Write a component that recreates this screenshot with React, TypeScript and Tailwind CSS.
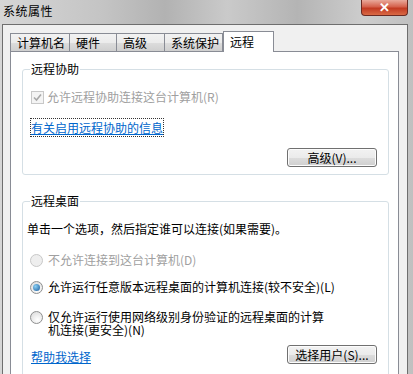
import React from "react";

const font = { fontFamily: '"Noto Sans CJK SC", "Liberation Sans", sans-serif' };

function Btn({ children }: { children: React.ReactNode }) {
  return (
    <div className="w-[90px] h-[19px] border border-[#707070] rounded-[3px] bg-[linear-gradient(180deg,#f2f2f2_0%,#ebebeb_50%,#dddddd_51%,#cfcfcf_100%)] shadow-[inset_0_0_0_1px_#fcfcfc] flex items-center justify-center text-[12px] leading-none text-black">
      {children}
    </div>
  );
}

function Radio({ checked, disabled }: { checked?: boolean; disabled?: boolean }) {
  return (
    <div
      className={
        "w-[13px] h-[13px] rounded-full border flex items-center justify-center shrink-0 " +
        (disabled
          ? "border-[#c8c8c8] bg-[#eeeeee]"
          : "border-[#8e8f8f] bg-[radial-gradient(circle_at_60%_70%,#ffffff,#d8d8d8)]")
      }
    >
      {checked && <div className="w-[7px] h-[7px] rounded-full bg-[radial-gradient(circle_at_35%_35%,#8ad0f5,#1a5a9a)]" />}
    </div>
  );
}

function Tab({ label, w, active }: { label: string; w: string; active?: boolean }) {
  return (
    <div
      className={
        "border border-[#898c95] border-b-0 flex items-center pl-[6px] text-[12px] leading-none text-black " +
        w +
        (active
          ? " h-[21px] bg-white -mb-px relative z-10"
          : " h-[18px] -ml-px first:ml-0 bg-[linear-gradient(180deg,#f2f2f2,#ebebeb_50%,#dddddd_51%,#cfcfcf)]")
      }
    >
      {label}
    </div>
  );
}

export default function App() {
  return (
    <div
      className="w-[413px] h-[374px] overflow-hidden bg-[linear-gradient(90deg,#d6d6d6_0%,#c4c4c4_25%,#b2b2b2_40%,#cacaca_55%,#b4b4b4_72%,#cdcdcd_88%,#c0c0c0_100%)] flex flex-col"
      style={font}
    >
      {/* title bar */}
      <div className="h-[24px] shrink-0 flex items-start justify-between">
        <span className="text-[12px] tracking-[0.5px] text-black pl-[3px] pt-[3px] leading-[15px]">系统属性</span>
        <div className="mr-[5px] w-[47px] h-[16px] rounded-b-[4px] border border-t-0 border-[#6b2a22] bg-[linear-gradient(180deg,#e9a99b_0%,#d5614c_45%,#c23a22_55%,#d96a45_100%)] flex items-center justify-center">
          <span className="text-white text-[13px] font-bold leading-none" style={{ fontFamily: '"Liberation Sans", sans-serif' }}>
            ✕
          </span>
        </div>
      </div>

      {/* client area */}
      <div className="ml-[2px] w-[406px] flex-1 bg-[#f0f0f0] border border-[#6e6e6e] border-b-0 pt-[6px] pl-[7px] flex flex-col">
        <div className="flex items-end">
          <Tab label="计算机名" w="w-[60px]" />
          <Tab label="硬件" w="w-[48px]" />
          <Tab label="高级" w="w-[49px]" />
          <Tab label="系统保护" w="w-[59px]" />
          <Tab label="远程" w="w-[51px]" active />
        </div>

        <div className="w-[389px] flex-1 bg-white border border-[#898c95] border-b-0 pl-[11px] pt-[11px] text-[12px] text-black">
          {/* 远程协助 */}
          <div className="relative w-[367px] h-[106px] border border-[#d5dfe5] rounded-[3px] mt-[6px]">
            <span className="absolute -top-[9px] left-[7px] bg-white px-[1px] leading-[16px]">远程协助</span>
            <div className="flex items-center gap-[3px] pl-[8px] pt-[20px]">
              <div className="w-[13px] h-[13px] border border-[#c8c8c8] bg-[#f4f4f4] flex items-center justify-center">
                <svg width="9" height="9" viewBox="0 0 9 9">
                  <path d="M1 4.5 L3.5 7 L8 1.5" stroke="#a8a8a8" strokeWidth="1.6" fill="none" />
                </svg>
              </div>
              <span className="text-[#a0a0a0] leading-[14px]">允许远程协助连接这台计算机(R)</span>
            </div>
            <div className="pl-[8px] pt-[15px]">
              <span className="text-[#0066cc] underline leading-[14px] outline-1 outline-dotted outline-[#333]">
                有关启用远程协助的信息
              </span>
            </div>
            <div className="flex justify-end pr-[11px] pt-[11px]">
              <Btn>高级(V)...</Btn>
            </div>
          </div>

          {/* 远程桌面 */}
          <div className="relative w-[367px] h-[200px] border border-[#d5dfe5] rounded-[3px] mt-[26px]">
            <span className="absolute -top-[9px] left-[7px] bg-white px-[1px] leading-[16px]">远程桌面</span>
            <div className="pl-[4px] pt-[20px] leading-[14px]">单击一个选项，然后指定谁可以连接(如果需要)。</div>
            <div className="flex items-center gap-[5px] pl-[7px] pt-[17px]">
              <Radio disabled />
              <span className="text-[#a0a0a0] leading-[14px]">不允许连接到这台计算机(D)</span>
            </div>
            <div className="flex items-center gap-[5px] pl-[7px] pt-[13px]">
              <Radio checked />
              <span className="leading-[14px]">允许运行任意版本远程桌面的计算机连接(较不安全)(L)</span>
            </div>
            <div className="flex items-start gap-[5px] pl-[7px] pt-[16px]">
              <div className="pt-[1px]">
                <Radio />
              </div>
              <span className="leading-[13px] w-[280px]">仅允许运行使用网络级别身份验证的远程桌面的计算机连接(更安全)(N)</span>
            </div>
            <div className="flex items-start justify-between pl-[8px] pr-[11px] pt-[9px]">
              <span className="text-[#0066cc] underline leading-[14px] pt-[5px]">帮助我选择</span>
              <Btn>选择用户(S)...</Btn>
            </div>
          </div>
        </div>
      </div>
    </div>
  );
}
